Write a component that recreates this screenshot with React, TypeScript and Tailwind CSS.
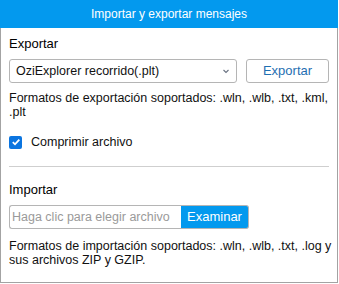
import React from 'react';

const ChevronDown = () => (
  <svg width="8" height="8" viewBox="0 0 8 8" className="text-gray-500">
    <path d="M1.5 3l2.5 2.5L6.5 3" fill="none" stroke="currentColor" strokeWidth="1.1" />
  </svg>
);

const App: React.FC = () => {
  return (
    <div className="w-[339px] h-[284px] bg-white" style={{ fontFamily: '"Liberation Sans", Arial, sans-serif' }}>
      <div className="w-[338px] h-[283px] border border-[#a3a3a3] flex flex-col text-[12.5px] text-[#111]">
        <div className="h-[28px] -mx-px -mt-px bg-[#0399ee] text-white flex items-center justify-center text-[12px]">
          Importar y exportar mensajes
        </div>

        <div className="px-[8px] pt-[8px]">
          <div className="text-[13px] leading-[15px] text-black">Exportar</div>

          <div className="flex gap-[9px] mt-[8px]">
            <div className="w-[228px] h-[24px] border border-[#b5b5b5] rounded-[3px] flex items-center justify-between pl-[6px] pr-[6px]">
              <span>OziExplorer recorrido(.plt)</span>
              <ChevronDown />
            </div>
            <button className="w-[83px] h-[24px] border border-[#b5b5b5] rounded-[3px] text-[#1f6fb2] bg-white text-[13px]">
              Exportar
            </button>
          </div>

          <p className="mt-[8px] leading-[14px] w-[324px]">
            Formatos de exportación soportados: .wln, .wlb, .txt, .kml, .plt
          </p>

          <label className="flex items-center h-[14px] gap-[9px] mt-[16px]">
            <span className="w-[13px] h-[13px] rounded-[2px] bg-[#0b75e0] flex items-center justify-center">
              <svg width="10" height="10" viewBox="0 0 10 10">
                <path d="M1.8 5.2l2.2 2.1L8.3 2.6" fill="none" stroke="white" strokeWidth="1.8" />
              </svg>
            </span>
            <span>Comprimir archivo</span>
          </label>

          <div className="h-px bg-[#cfcfcf] mt-[17px]" />

          <div className="text-[13px] leading-[15px] text-black mt-[15px]">Importar</div>

          <div className="flex mt-[8px]">
            <div className="w-[172px] h-[24px] border border-[#b5b5b5] border-r-0 rounded-l-[3px] flex items-center pl-[2px] text-[#9a9a9a]">
              Haga clic para elegir archivo
            </div>
            <button className="w-[68px] h-[24px] bg-[#0399ee] text-white rounded-r-[3px] border border-[#b5b5b5] border-l-0 text-[13px]">
              Examinar
            </button>
          </div>

          <p className="mt-[10px] leading-[14px] w-[324px]">
            Formatos de importación soportados: .wln, .wlb, .txt, .log y sus archivos ZIP y GZIP.
          </p>
        </div>
      </div>
    </div>
  );
};

export default App;
